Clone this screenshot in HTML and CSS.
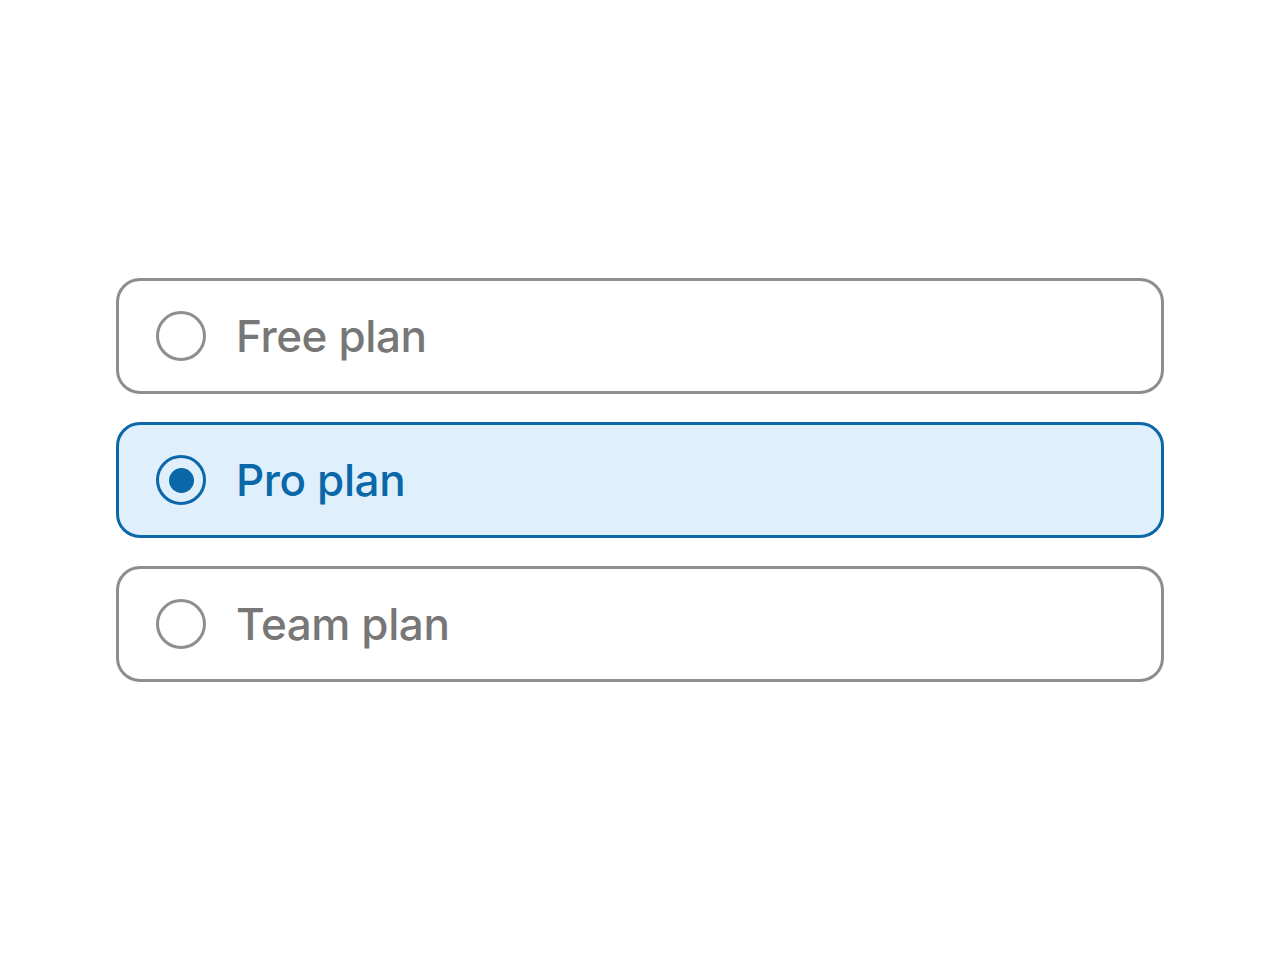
FILE: index.html
```html
<!DOCTYPE html>
<html lang="en">
<head>
<meta charset="utf-8">
<title>Plans</title>
<link rel="stylesheet" href="styles.css">
</head>
<body>
<main class="page">
  <div class="plans" role="radiogroup">
    <label class="plan">
      <span class="radio"></span>
      <span class="plan-name">Free plan</span>
    </label>
    <label class="plan plan--selected">
      <span class="radio"><span class="radio-dot"></span></span>
      <span class="plan-name">Pro plan</span>
    </label>
    <label class="plan">
      <span class="radio"></span>
      <span class="plan-name">Team plan</span>
    </label>
  </div>
</main>
</body>
</html>
```

FILE: styles.css
```css
html, body {
  margin: 0;
  padding: 0;
  background: #ffffff;
}

.page {
  min-height: 960px;
  display: flex;
  align-items: center;
  justify-content: center;
  font-family: Inter, "Noto Sans", "Liberation Sans", sans-serif;
}

.plans {
  width: 1048px;
  display: flex;
  flex-direction: column;
  gap: 28px;
}

.plan {
  box-sizing: border-box;
  height: 116px;
  display: flex;
  align-items: center;
  gap: 30px;
  padding-left: 37px;
  border: 3px solid #8e8e8e;
  border-radius: 24px;
  background: #ffffff;
  color: #777777;
}

.radio {
  box-sizing: border-box;
  width: 50px;
  height: 50px;
  flex: none;
  border: 3px solid #8e8e8e;
  border-radius: 50%;
  display: flex;
  align-items: center;
  justify-content: center;
}

.plan-name {
  font-size: 44px;
  font-weight: 500;
  letter-spacing: -0.4px;
}

.plan--selected {
  border-color: #0b68a8;
  background: #dff0fc;
  color: #0b68a8;
}

.plan--selected .radio {
  border-color: #0b68a8;
}

.radio-dot {
  width: 25px;
  height: 25px;
  border-radius: 50%;
  background: #0b68a8;
}
```
